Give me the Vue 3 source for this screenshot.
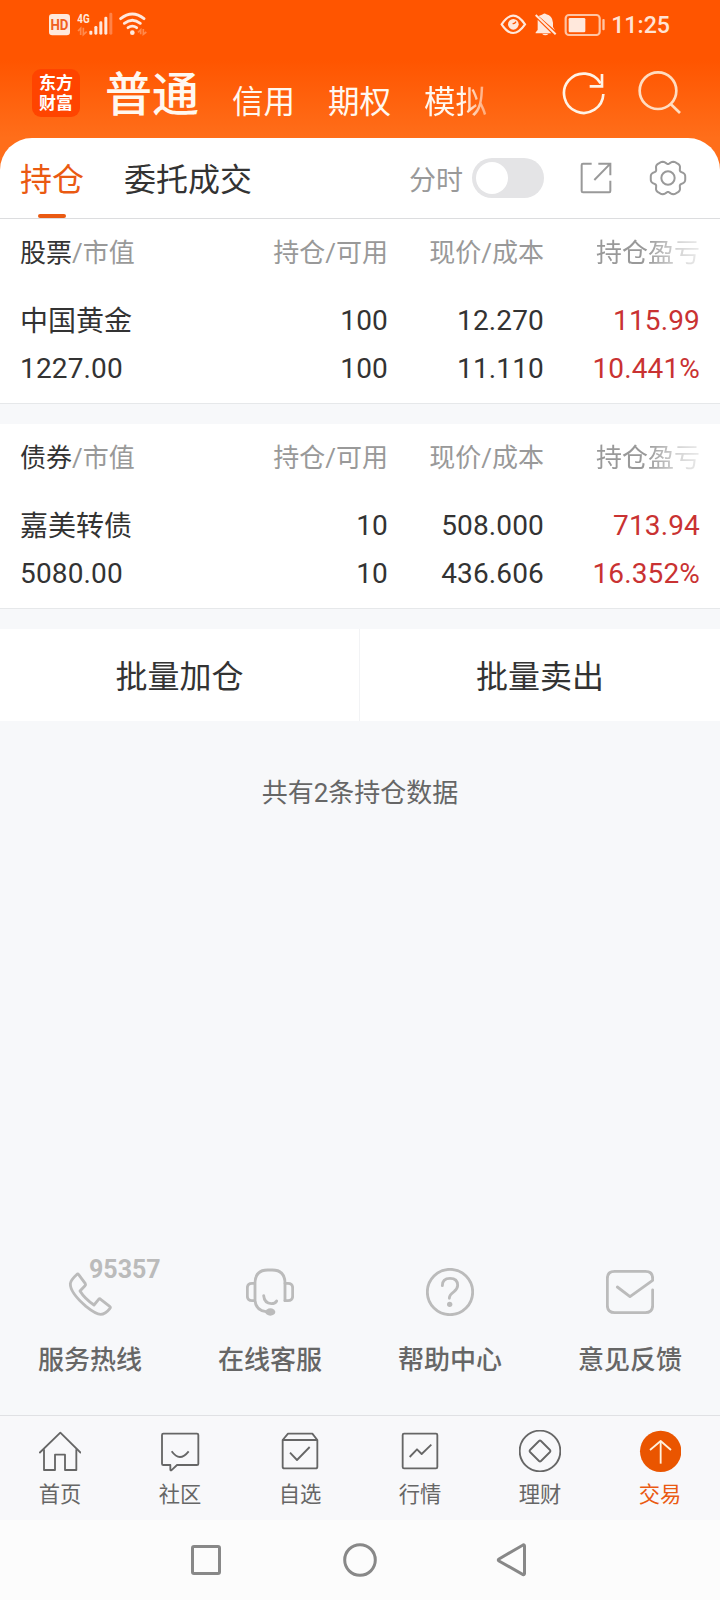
<template>
  <div class="trade-page">
    <!-- 頂部 -->
    <header class="top">
      <div class="status-bar">
        <svg class="status-left" width="104" height="30" viewBox="0 0 312 90">
          <rect x="9" y="15" width="63" height="64" rx="10" fill="#ffe8dc" />
          <text x="40.5" y="62" class="hd-text" textLength="54" lengthAdjust="spacingAndGlyphs">HD</text>
          <text x="94" y="41" class="net-text" textLength="37" lengthAdjust="spacingAndGlyphs">4G</text>
          <g fill="none" stroke="#ff8a4d" stroke-width="5">
            <path d="M96 66L104 58V78M112 56V77L122 68" />
            <path d="M276 70L284 62V76M292 60V76L301 69" />
          </g>
          <g fill="#ffe8dc">
            <rect x="130" y="65" width="9" height="12" rx="3" />
            <rect x="145" y="51" width="9" height="26" rx="4" />
            <rect x="160" y="37" width="9" height="40" rx="4" />
            <rect x="175" y="23" width="9" height="54" rx="4" />
            <circle cx="259" cy="71" r="7" />
          </g>
          <rect x="190" y="11" width="9" height="66" rx="4" fill="#ff8247" />
          <g fill="none" stroke="#ffe8dc" stroke-width="8.5" stroke-linecap="round">
            <path d="M224 29Q259 1 294 29" />
            <path d="M235 43Q259 24 283 43" />
            <path d="M246 56Q259 47 272 56" />
          </g>
        </svg>
        <div class="status-right">
          <svg width="108" height="30" viewBox="0 0 324 90">
            <g fill="none" stroke="#ffe8dc" stroke-width="6.5">
              <path d="M5 43Q39 -9 75 43Q39 95 5 43Z" />
              <rect x="197" y="15" width="102" height="60" rx="10" stroke="#ffc4a3" />
            </g>
            <circle cx="40" cy="43" r="16" fill="#ffe8dc" />
            <path d="M38 40Q43 43 48 35" fill="none" stroke="#ff5500" stroke-width="4" />
            <path d="M116 18Q128 14 131 11Q135 9 139 13Q157 17 159 38V51L165 61Z" fill="#ffe8dc" />
            <path d="M113 29L154 70H107Q105 68 113 60Z" fill="#ffe8dc" />
            <path d="M126 71H146Q136 80 126 71Z" fill="#ffe8dc" />
            <path d="M107 15L167 73" fill="none" stroke="#ffe8dc" stroke-width="6" />
            <rect x="206" y="24" width="50" height="43" rx="4" fill="#ffe8dc" />
            <rect x="307" y="27" width="7" height="34" rx="3" fill="#ffc4a3" />
          </svg>
          <span class="clock">11:25</span>
        </div>
      </div>

      <div class="account-bar">
        <div class="logo"><span>东方</span><span>财富</span></div>
        <span class="account active">普通</span>
        <span class="account">信用</span>
        <span class="account">期权</span>
        <span class="account fade">模拟</span>
        <div class="top-icons">
          <svg width="45" height="45" viewBox="0 0 135 135">
            <path d="M127 69A59 59 0 1 1 119 37" />
            <path d="M123 9V46H86" />
          </svg>
          <svg class="search" width="45" height="45" viewBox="0 0 135 135">
            <circle cx="63" cy="59" r="55" />
            <path d="M101 99L129 126" />
          </svg>
        </div>
      </div>
    </header>

    <main class="content">
      <!-- 分頁 -->
      <div class="tabs">
        <div
          v-for="tab in tabs"
          :key="tab"
          class="tab"
          :class="{ selected: tab === currentTab }"
          @click="currentTab = tab">
          {{ tab }}
        </div>
        <div class="tools">
          <span>分时</span>
          <button class="switch" :class="{ on: timeShare }" @click="timeShare = !timeShare"></button>
          <svg class="export" width="34" height="34" viewBox="0 0 102 102">
            <path d="M38 8H12Q8 8 8 12V90Q8 94 12 94H91Q94 94 94 90V59" />
            <path d="M58 8H94V43M94 8L46 57" />
          </svg>
          <svg class="gear" width="38" height="38" viewBox="0 0 114 114">
            <path :d="gearPath" />
            <circle cx="57" cy="57" r="20" />
          </svg>
        </div>
      </div>

      <!-- 持倉列表 -->
      <section v-for="item in holdings" :key="item.name" class="holding">
        <div class="row head">
          <span><b>{{ item.type }}</b>/市值</span>
          <span>持仓/可用</span>
          <span>现价/成本</span>
          <span class="fade-out">持仓盈亏</span>
        </div>
        <div class="row first">
          <span>{{ item.name }}</span>
          <span>{{ item.amount }}</span>
          <span>{{ item.price }}</span>
          <span class="up">{{ item.profit }}</span>
        </div>
        <div class="row">
          <span>{{ item.value }}</span>
          <span>{{ item.usable }}</span>
          <span>{{ item.cost }}</span>
          <span class="up">{{ item.rate }}</span>
        </div>
      </section>

      <div class="batch">
        <button>批量加仓</button>
        <button>批量卖出</button>
      </div>

      <p class="total">共有{{ holdings.length }}条持仓数据</p>
    </main>

    <!-- 客服 -->
    <div class="services">
      <div v-for="s in services" :key="s.label" class="service">
        <div class="service-icon">
          <svg width="48" height="48" viewBox="0 0 144 144">
            <path v-for="d in s.paths" :key="d" :d="d" />
            <ellipse v-if="s.dot" v-bind="s.dot" />
          </svg>
          <span v-if="s.badge" class="phone-no">{{ s.badge }}</span>
        </div>
        <span>{{ s.label }}</span>
      </div>
    </div>

    <!-- 底部選單 -->
    <nav class="menu">
      <div
        v-for="m in menus"
        :key="m.label"
        class="menu-item"
        :class="{ current: m.label === currentMenu }"
        @click="currentMenu = m.label">
        <svg width="42" height="42" viewBox="0 0 126 126">
          <circle v-if="m.solid" cx="65" cy="64" r="62" class="solid" />
          <path v-for="d in m.paths" :key="d" :d="d" :class="{ light: m.solid }" />
        </svg>
        <span>{{ m.label }}</span>
      </div>
    </nav>

    <div class="system-nav">
      <svg width="36" height="36" viewBox="0 0 36 36"><rect x="4.5" y="4.5" width="27" height="27" rx="1.5" /></svg>
      <svg width="36" height="36" viewBox="0 0 36 36"><circle cx="18" cy="18" r="15.3" /></svg>
      <svg width="36" height="36" viewBox="0 0 36 36"><path d="M28.5 4V31.5Q28.5 33 27 32.5L3 19Q1.5 18 3 17L27 3Q28.5 2.5 28.5 4Z" /></svg>
    </div>
  </div>
</template>

<script setup>
import { ref } from 'vue';

const tabs = ['持仓', '委托成交'];
const currentTab = ref('持仓');
const currentMenu = ref('交易');
const timeShare = ref(false);

const holdings = ref([
  { type: '股票', name: '中国黄金', value: '1227.00', amount: 100, usable: 100, price: '12.270', cost: '11.110', profit: '115.99', rate: '10.441%' },
  { type: '债券', name: '嘉美转债', value: '5080.00', amount: 10, usable: 10, price: '508.000', cost: '436.606', profit: '713.94', rate: '16.352%' }
]);

const services = [
  {
    label: '服务热线',
    badge: '95357',
    paths: ['M34 18Q36 17 38 20L58 47Q60 50 57 53L42 69Q56 92 84 111L98 94Q101 91 104 94L131 115Q135 118 132 121Q118 139 104 139Q90 139 60 115Q12 74 13 47Q14 36 34 18Z']
  },
  {
    label: '在线客服',
    paths: [
      'M27 46V98M117 98V46Q117 6 79 6H65Q27 6 27 46H18Q4 46 4 60V84Q4 98 18 98H27Q30 128 60 131',
      'M117 46H126Q140 46 140 60V84Q140 98 126 98H117',
      'M53 83Q55 106 76 107Q88 107 92 99'
    ],
    dot: { cx: 73, cy: 132, rx: 15, ry: 11 }
  },
  {
    label: '帮助中心',
    paths: [
      'M4 72A68 68 0 1 1 140 72A68 68 0 1 1 4 72Z',
      'M49 53Q49 31 72 31Q95 31 95 52Q95 62 84 71Q70 81 70 91'
    ],
    dot: { cx: 71, cy: 109, rx: 8, ry: 8 }
  },
  {
    label: '意见反馈',
    paths: ['M140 66V112Q140 134 118 134H26Q4 134 4 112V32Q4 10 26 10H118Q140 10 140 32V37L72 86L34 57']
  }
];

const menus = [
  { label: '首页', paths: ['M1 69L64 8L126 69', 'M15 58V120H48V74H78V120H112V58'] },
  { label: '社区', paths: ['M13 11H114Q118 11 118 15V101Q118 105 114 105H54L37 121Q34 122 34 118V105H13Q9 105 9 101V15Q9 11 13 11Z', 'M38 64Q62 98 89 64'] },
  { label: '自选', paths: ['M11 30V110Q11 115 16 115H110Q115 115 115 110V30L100 11H27Z', 'M11 30H115', 'M33 68L54 90L92 51'] },
  { label: '行情', paths: ['M15 11H111Q115 11 115 15V111Q115 115 111 115H15Q11 115 11 111V15Q11 11 15 11Z', 'M32 81L54 58L68 72L97 44'] },
  { label: '理财', paths: ['M2 63A61 61 0 1 1 124 63A61 61 0 1 1 2 63Z', 'M60 33Q63 30 66 33L93 60Q96 63 93 66L66 93Q63 96 60 93L33 66Q30 63 33 60Z'] },
  { label: '交易', solid: true, paths: ['M65 101V33', 'M33 60L65 33L96 60'] }
];

// 齒輪外框，六個凸角
const gearPath = (() => {
  const points = [];
  for (let a = 0; a < 360; a += 4) {
    const t = (a * Math.PI) / 180;
    const r = 48.5 + 5 * Math.cos(6 * t) - 1.8 * Math.cos(12 * t);
    points.push(`${(57 + r * Math.cos(t)).toFixed(1)} ${(57 + r * Math.sin(t)).toFixed(1)}`);
  }
  return `M${points.join('L')}Z`;
})();
</script>

<style>
body {
  background: #f7f8fa;
}
</style>

<style scoped>
.trade-page {
  display: flex;
  flex-direction: column;
  width: 720px;
  height: 1600px;
  overflow: hidden;
  background: linear-gradient(#ff5500 60px, #ff6e1a 138px, #ff6e1a 200px, #f7f8fa 200px);
  font-family: Roboto, "Noto Sans CJK SC", sans-serif;
  color: #333;
}

svg {
  display: block;
  flex: none;
}

button {
  border: none;
  padding: 0;
  font-family: inherit;
  color: inherit;
  cursor: pointer;
}

.top {
  height: 138px;
}

.status-bar {
  display: flex;
  justify-content: space-between;
  height: 50px;
  padding: 10px 50px 0 46px;
  box-sizing: border-box;
}

.status-left {
  margin-top: -1px;
}

.hd-text {
  font-size: 42px;
  font-weight: 700;
  text-anchor: middle;
  fill: #f06020;
}

.net-text {
  font-size: 37px;
  font-weight: 700;
  fill: #ffe8dc;
}

.status-right {
  display: flex;
  gap: 3px;
}

.clock {
  font-size: 23.2px;
  font-weight: 500;
  line-height: 30px;
  color: #ffe3d3;
}

.account-bar {
  display: flex;
  height: 88px;
  padding: 19px 38px 0 32px;
  box-sizing: border-box;
}

.logo {
  display: flex;
  flex-direction: column;
  align-items: center;
  justify-content: center;
  width: 48px;
  height: 48px;
  margin-right: 25px;
  border-radius: 9px;
  background: #ff4400;
  color: #fff;
  font-size: 17px;
  font-weight: 700;
  line-height: 20px;
}

.account {
  margin-right: 33px;
  font-size: 31.5px;
  line-height: 68px;
  color: #fff8f0;
}

.account.active {
  font-size: 47px;
  font-weight: 500;
  line-height: 51px;
}

.account.fade {
  margin-right: 0;
  mask-image: linear-gradient(90deg, #000 60%, rgba(0, 0, 0, 0.45));
}

.top-icons {
  display: flex;
  gap: 31px;
  margin-left: auto;
  padding-top: 2px;
}

.top-icons svg {
  fill: none;
  stroke: #fff3e6;
  stroke-width: 8;
}

.top-icons .search {
  stroke: #ffdcc0;
}

.content {
  flex: 1;
}

.tabs {
  display: flex;
  height: 81px;
  padding: 0 33px 0 20px;
  box-sizing: border-box;
  border-bottom: 1px solid #dcdddf;
  border-radius: 32px 32px 0 0;
  background: #fff;
}

.tab {
  position: relative;
  margin-right: 40px;
  font-size: 32px;
  line-height: 84px;
}

.tab.selected {
  color: #ea5a12;
}

.tab.selected::after {
  content: "";
  position: absolute;
  left: 18px;
  bottom: 0;
  width: 28px;
  height: 4px;
  border-radius: 2px;
  background: #ea5a12;
}

.tools {
  display: flex;
  align-items: center;
  margin-left: auto;
  height: 80px;
  font-size: 27px;
  color: #999;
}

.switch {
  width: 72px;
  height: 40px;
  margin-right: 35px;
  margin-left: 9px;
  padding: 4px;
  border-radius: 20px;
  background: #e4e4e6;
}

.switch::before {
  content: "";
  display: block;
  width: 32px;
  height: 32px;
  border-radius: 50%;
  background: #fff;
}

.switch.on {
  background: #ea5a12;
}

.switch.on::before {
  margin-left: 32px;
}

.tools svg {
  fill: none;
  stroke: #999;
  stroke-width: 6;
}

.tools .gear {
  margin-left: 36px;
}

.holding {
  height: 185px;
  margin-bottom: 20px;
  box-sizing: border-box;
  border-bottom: 1px solid #e6e8ea;
  background: #fff;
}

.row {
  display: grid;
  grid-template-columns: 1fr 156px 156px 156px;
  padding: 0 20px;
  font-size: 28px;
  line-height: 47px;
  height: 48px;
  letter-spacing: 0.15px;
  text-align: right;
}

.row span:first-child {
  text-align: left;
}

.row.first span:first-child {
  padding-top: 1px;
  letter-spacing: 0;
}

.row.head {
  height: 78px;
  font-size: 26px;
  line-height: 68px;
  letter-spacing: 0;
  color: #999;
}

.row.head b {
  font-weight: 400;
  color: #333;
}

.fade-out {
  mask-image: linear-gradient(90deg, #000 66%, rgba(0, 0, 0, 0.45) 84%, rgba(0, 0, 0, 0.2));
}

.up {
  color: #c93232;
}

.batch {
  display: flex;
  height: 92px;
  background: #fff;
}

.batch button {
  width: 360px;
  box-sizing: border-box;
  padding-bottom: 2px;
  background: none;
  font-size: 32px;
}

.batch button:first-child {
  border-right: 1px solid #f2f3f5;
}

.total {
  margin: 51px 0 0;
  font-size: 26px;
  line-height: 42px;
  text-align: center;
  color: #666;
}

.services {
  display: flex;
  height: 147px;
}

.service {
  flex: 1;
  display: flex;
  flex-direction: column;
  align-items: center;
  font-size: 26px;
  font-weight: 500;
  line-height: 40px;
  color: #666;
}

.service-icon {
  position: relative;
  margin-bottom: 24px;
}

.service-icon svg {
  fill: none;
  stroke: #bbb;
  stroke-width: 8.5;
  stroke-linecap: round;
  stroke-linejoin: round;
}

.service-icon ellipse {
  fill: #bbb;
  stroke: none;
}

.phone-no {
  position: absolute;
  left: 23px;
  top: -13px;
  font-family: Roboto, sans-serif;
  font-size: 25px;
  font-weight: 700;
  line-height: 30px;
  color: #bbb;
}

.menu {
  display: flex;
  height: 105px;
  box-sizing: border-box;
  border-top: 1px solid #e0e1e4;
  background: #f8f8fa;
}

.menu-item {
  flex: 1;
  display: flex;
  flex-direction: column;
  align-items: center;
  padding-top: 14px;
  font-size: 21.3px;
  line-height: 46px;
  color: #666;
  cursor: pointer;
}

.menu-item svg {
  fill: none;
  stroke: #666;
  stroke-width: 5.5;
  stroke-linejoin: round;
}

.menu-item .solid {
  fill: #ea5500;
  stroke: none;
}

.menu-item .light {
  stroke: #fff0dc;
}

.menu-item.current {
  color: #ea5a12;
}

.system-nav {
  display: flex;
  justify-content: center;
  align-items: center;
  gap: 118px;
  height: 80px;
  background: #fcfcfc;
}

.system-nav svg {
  fill: none;
  stroke: #888;
  stroke-width: 3;
}
</style>
